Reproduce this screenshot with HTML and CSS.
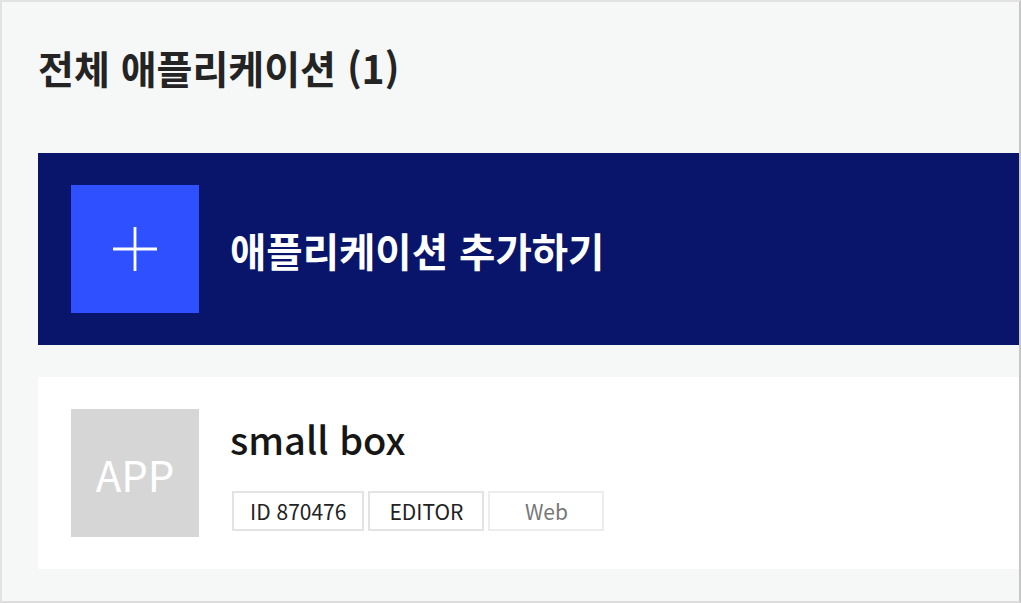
FILE: index.html
```html
<!DOCTYPE html>
<html lang="ko">
<head>
<meta charset="utf-8">
<link rel="stylesheet" href="styles.css">
</head>
<body>
<div class="frame">
  <h1 class="title">전체 애플리케이션 (1)</h1>
  <div class="banner">
    <div class="plus-box">
      <svg width="48" height="48" viewBox="0 0 48 48"><path d="M24 2V46M2 24H46" stroke="#fff" stroke-width="2.8" fill="none"/></svg>
    </div>
    <div class="banner-text">애플리케이션 추가하기</div>
  </div>
  <div class="card">
    <div class="app-thumb">APP</div>
    <div class="info">
      <div class="name">small box</div>
      <div class="tags">
        <span class="tag tag-id">ID 870476</span>
        <span class="tag">EDITOR</span>
        <span class="tag tag-web">Web</span>
      </div>
    </div>
  </div>
</div>
</body>
</html>
```
FILE: styles.css
```css
* { box-sizing: border-box; }
html, body { margin: 0; padding: 0; background: #fff; }
body { font-family: "Noto Sans CJK KR", "Noto Sans", sans-serif; }
.frame {
  width: 1021px;
  height: 603px;
  background: #f6f7f7;
  border-top: 2px solid #e2e2e2;
  border-left: 2px solid #e2e2e2;
  border-right: 2px solid #c6c6c6;
  border-bottom: 2px solid #dcdcdc;
  padding: 43px 0 0 36px;
}
.title {
  margin: 0;
  font-size: 39px;
  line-height: 44px;
  font-weight: 700;
  color: #242424;
}
.banner {
  margin-top: 64px;
  height: 192px;
  background: #08156a;
  display: flex;
  align-items: center;
  gap: 31px;
  padding: 0 33px;
}
.plus-box {
  width: 128px;
  height: 128px;
  background: #2e50ff;
  display: flex;
  align-items: center;
  justify-content: center;
}
.banner-text {
  color: #fff;
  font-size: 39.5px;
  font-weight: 700;
}
.card {
  margin-top: 32px;
  height: 192px;
  background: #fff;
  display: flex;
  align-items: center;
  gap: 31px;
  padding: 0 33px;
}
.app-thumb {
  width: 128px;
  height: 128px;
  background: #d6d6d6;
  color: #fff;
  font-size: 42px;
  display: flex;
  align-items: center;
  justify-content: center;
}
.info {
  display: flex;
  flex-direction: column;
  height: 128px;
  padding-top: 6px;
}
.name {
  font-size: 38px;
  line-height: 48px;
  font-weight: 500;
  color: #161616;
}
.tags {
  display: flex;
  gap: 4px;
  margin-top: 28px;
  margin-left: 2px;
}
.tag {
  min-width: 116px;
  height: 40px;
  border: 2px solid #e3e3e3;
  display: flex;
  align-items: center;
  justify-content: center;
  font-size: 21px;
  color: #222;
  padding: 0 16px;
}
.tag-web { color: #777; border-color: #ededed; }
```
